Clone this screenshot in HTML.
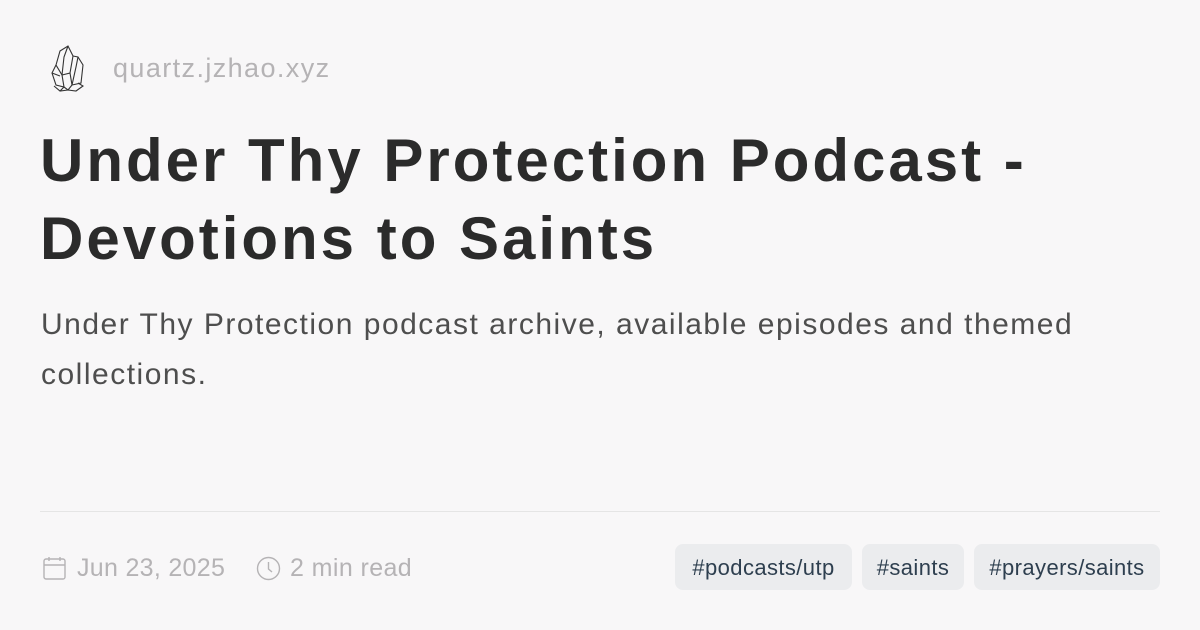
<!DOCTYPE html>
<html><head><meta charset="utf-8"><style>
html,body{margin:0;padding:0}
body{width:1200px;height:630px;background:#f8f7f8;font-family:"Liberation Sans",sans-serif;position:relative;overflow:hidden}
.site{position:absolute;left:113px;top:53px;font-size:27px;color:#b5b3b5;letter-spacing:1.4px}
.logo{position:absolute;left:48px;top:43px}
h1{position:absolute;left:40px;top:122px;margin:0;font-size:60px;line-height:78px;font-weight:700;color:#2b2b2b;letter-spacing:3px;width:1150px;white-space:nowrap}
.desc{position:absolute;left:41px;top:300px;font-size:30px;line-height:50px;color:#4e4e4e;letter-spacing:1.5px;white-space:nowrap}
.rule{position:absolute;left:40px;right:40px;top:511px;height:1px;background:#e5e5e5}
.meta{position:absolute;top:554px;font-size:25px;color:#b5b3b5}
.tag{position:absolute;top:544px;height:46px;line-height:48px;background:#ebecee;border-radius:8px;font-size:22px;color:#2e3f4f;text-align:center;letter-spacing:0.4px}
</style></head><body>
<svg class="logo" width="38" height="50" viewBox="0 0 38 50" fill="none" stroke="#333" stroke-width="1.1">
<path d="M12 8 L20 3 L25 13 L22 30 L14 32 L8 22 Z"/><path d="M20 3 L16 14 L14 32"/><path d="M25 13 L30 14 L35 22 L33 40 L24 42 L22 30"/><path d="M30 14 L28 24 L24 42"/><path d="M8 22 L4 30 L8 42 L16 44 L14 32"/><path d="M4 30 L12 33"/><path d="M6 43 L12 48 L20 47 L28 48 L35 43 L30 40 M12 48 L16 44 L20 47 L24 42"/>
</svg>
<div class="site">quartz.jzhao.xyz</div>
<h1>Under Thy Protection Podcast -<br>Devotions to Saints</h1>
<div class="desc">Under Thy Protection podcast archive, available episodes and themed<br>collections.</div>
<div class="rule"></div>
<svg style="position:absolute;left:43px;top:556px" width="24" height="25" viewBox="0 0 24 25" fill="none" stroke="#b5b3b5" stroke-width="1.4"><rect x="1" y="3" width="21" height="20" rx="2"/><path d="M1 9 H22 M6 1 V5 M17 1 V5"/></svg>
<div class="meta" style="left:77px;letter-spacing:0.3px">Jun 23, 2025</div>
<svg style="position:absolute;left:256px;top:556px" width="25" height="25" viewBox="0 0 25 25" fill="none" stroke="#b5b3b5" stroke-width="1.4"><circle cx="12.5" cy="12.5" r="11"/><path d="M12.5 6 V13 L16 16"/></svg>
<div class="meta" style="left:290px;letter-spacing:0.4px">2 min read</div>
<div class="tag" style="left:675px;width:177px">#podcasts/utp</div>
<div class="tag" style="left:862px;width:102px">#saints</div>
<div class="tag" style="left:974px;width:186px">#prayers/saints</div>
</body></html>
